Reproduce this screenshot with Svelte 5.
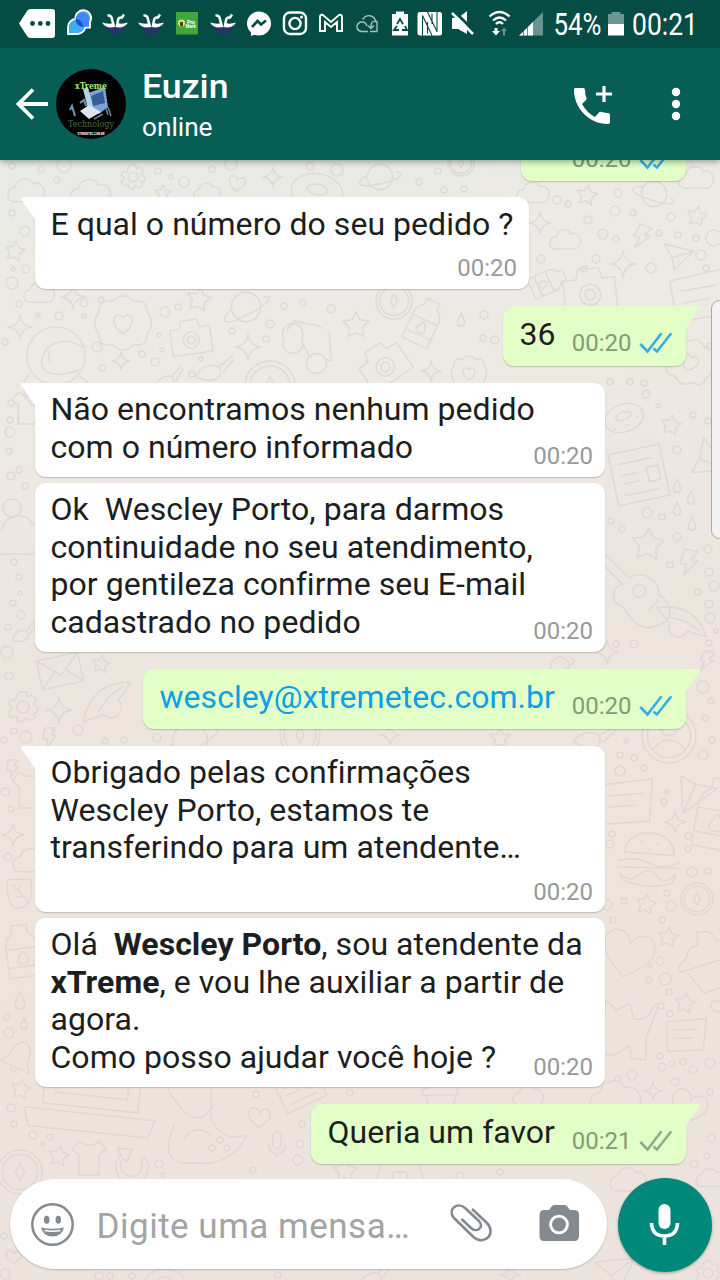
<script>
  const messages = [
    { out: true, width: 165, gap: 0, lines: [''], time: '00:20', read: true },
    { tail: true, width: 494.5, height: 91.5, gap: 16.5, stack: true, lines: ['E qual o número do seu pedido ?'], time: '00:20' },
    { out: true, tail: true, width: 183, height: 60, gap: 17, lines: ['36'], time: '00:20', read: true },
    { tail: true, width: 570.5, height: 94, gap: 17, lines: ['Não encontramos nenhum pedido', 'com o número informado'], time: '00:20' },
    { width: 570.5, height: 169, gap: 6, lines: ['Ok  Wescley Porto, para darmos', 'continuidade no seu atendimento,', 'por gentileza confirme seu E-mail', 'cadastrado no pedido'], time: '00:20' },
    { out: true, tail: true, link: true, width: 543, height: 60, gap: 17, lines: ['wescley@xtremetec.com.br'], time: '00:20', read: true },
    { tail: true, width: 570.5, height: 166.5, gap: 17, stack: true, lines: ['Obrigado pelas confirmações', 'Wescley Porto, estamos te', 'transferindo para um atendente…'], time: '00:20' },
    { width: 570.5, height: 169.5, gap: 5.5, lines: ['Olá  *Wescley Porto*, sou atendente da', '*xTreme*, e vou lhe auxiliar a partir de', 'agora.', 'Como posso ajudar você hoje ?'], time: '00:20' },
    { out: true, tail: true, width: 375, height: 60, gap: 17, lines: ['Queria um favor'], time: '00:21' }
  ];

  const shapes = {
    star: 'M0-10L3-4 10-3 5 2 6 9 0 6-6 9-5 2-10-3-3-4Z',
    spark: 'M0-10Q1-1 10 0Q1 1 0 10Q-1 1-10 0Q-1-1 0-10Z',
    heart: 'M0 8C-5 4-10 1-9-5C-7-10-1-9 0-4C2-9 8-9 9-4C10 1 5 4 0 8Z',
    cloud: 'M-7 6C-13 4-9-3-6-2C-5-8 3-8 4-4C10-6 13 3 7 6Z',
    drop: 'M0-10C2-4 6 0 5 5C4 10-4 10-5 5C-6 0-2-4 0-10Z',
    bolt: 'M-4-10H6L2-3H7L-2 10-1 1H-6Z',
    gear: 'M-2-10H2L3-7 6-8 9-5 7-2 10 0 10 3 7 4 8 7 5 9 2 7 0 10-4 9-4 6-8 7-10 4-7 1-10-2-8-5-5-4-4-8ZM4 0A4 4 0 1 1-4 0A4 4 0 1 1 4 0',
    planet: 'M7 0A7 7 0 1 1-7 0A7 7 0 1 1 7 0M-7 1C-14 8-9 9 0 4C9 0 15-6 8-5',
    camera: 'M-10-5H-5L-4-9H4L5-5H10V8H-10ZM4 1A4 4 0 1 1-4 1A4 4 0 1 1 4 1M2 1A2 2 0 1 1-2 1A2 2 0 1 1 2 1',
    mail: 'M-10-7H10V7H-10ZL0 2 10-7M-10 7L-3 0M10 7L3 0',
    news: 'M-9-9H9V9H-9ZM-6-5H6M-6-1H0M-6 2H0M-6 6H6M3-2H7V3H3Z',
    badge: 'M-4-8Q0-12 4-8Q9-9 9-4Q12 0 9 4Q9 9 4 8Q0 12-4 8Q-9 9-9 4Q-12 0-9-4Q-9-9-4-8ZM0 4C-6 0-3-5 0-2C3-5 6 0 0 4Z',
    helmet: 'M10 0A10 10 0 1 1-10 0A10 10 0 1 1 10 0M9-3C4-7-4-5-5 2C-5 7 1 7 8 5M-2-2Q-3 0-2 2M-9 6C-13 10-11 16-6 18M8 7C14 10 14 15 10 18',
    glasses: 'M-3-3A4 4 0 1 1-10-3A4 4 0 1 1-3-3M7 7A4 4 0 1 1-1 7A4 4 0 1 1 7 7M-3-2L0 4M-9-6L-6-10C-3-8 3-10 5-7M-6-10L4-8M8-6L9 6 6 5',
    bottle: 'M-3-10H3V-7Q6-5 6-2V10H-6V-2Q-6-5-3-7ZM-6-1H6M-6 6H6M0 0Q4 5 0 5Q-4 5 0 0',
    burger: 'M-8-2C-8-11 8-11 8-2ZM-10 1Q-5-1 0 1T10 0M-10 3L10 2M-9 5Q-6 8-3 5T3 5T9 4L8 7Q0 10-8 7ZM-3-6L-2-5M2-6L3-5M0-4V-3',
    cake: 'M0-10C7-9 4-6 6-5C10-4 8-1 9 1H-9C-10-2-7-2-6-3C-4-5-5-6-1-6ZM-7 2L-4 10H5L8 2',
    ring: 'M10 0A10 10 0 1 1-10 0A10 10 0 1 1 10 0M8 0A8 8 0 1 1-8 0A8 8 0 1 1 8 0M0-4L2 0 0 4-2 0Z',
    person: 'M10 0A10 10 0 1 1-10 0A10 10 0 1 1 10 0M8 0A8 8 0 1 1-8 0A8 8 0 1 1 8 0M3-3A3 3 0 1 1-3-3A3 3 0 1 1 3-3M-6 5Q0-2 6 5',
    laptop: 'M-8-10V6H8V-10M-6-10V4H6V-10M-11 7L11 7 10 10H-10ZM-2 0Q0 5 4 0',
    bell: 'M0-9C5-8 5-2 6 2L9 6H-9L-6 2C-5-2-5-8 0-9ZM-2 7Q0 10 2 7',
    leaf: 'M-8-8H6V2Q4 9-3 9Q-9 7-8-8M-5-5L5 6M-1-1V-5M2 2H-3',
    guitar: 'M-12-13L-3-4C1-7 7-3 6 1C11 4 11 10 5 11C0 13-3 8-5 5C-10 3-8-2-5-2L-14-11M2 0A2 2 0 1 1-2 0A2 2 0 1 1 2 0M3 6L6 3',
    wing: 'M-10 8C-8-2-2-8 9-8C7-4 5-2 4-1C8 3 3 9-2 5ZM-4 4Q0-3 6-6',
    plane: 'M-10-5L10-7 2 9-2 2ZM-2 2L10-7',
    tee: 'M-6-10L-10-5-6-2V10H6V-2L10-5 6-10Q0-5-6-10',
    reload: 'M7-5A9 9 0 1 1-6-6L-8-10 0-9-3-2-5-4A6 6 0 1 0 5-3Z',
    mic: 'M-3-6Q0-12 3-6V1Q0 6-3 1ZM-6-1Q-6 7 0 7T6-1M0 7V10',
    dino: 'M-10-10Q-3 3 2-6M-8-1Q-13 10-3 9Q6 10 10 2Q4 4 1-2V-12M-6 3Q-3-1 1 2',
    cat: 'M-8-9L-4-6 0-9 2-4Q7-4 8-9Q10-12 9-7L7 2 8 9H3L2 5-3 9H-8Z',
    brush: 'M-10 7C-8-1 0-3 3 0C6 5 0 10-10 7M2-1L9-9M5 2L10-7',
    donut: 'M10 0A10 7 0 1 1-10 0A10 7 0 1 1 10 0M4-1A4 2 0 1 1-4-1A4 2 0 1 1 4-1M-7 3L-6 4M0 4H1M6 2L7 1',
    note: 'M-9-7L10-8 8 7H-9ZM-6-3H6M-6 1H3'
  };

  // kind, x, y, scale, rotation
  const doodles = [
    ['cloud', 26, 191, 1.8, 0], ['gear', 133, 177, 1.2, 0], ['heart', 237, 184, .9, 10], ['spark', 273, 177, 1, 0], ['donut', 317, 192, 2.6, 10], ['cloud', 90, 193, 2, 0], ['star', 163, 193, .8, 0], ['cloud', 207, 192, 1.3, 0],
    ['planet', 380, 177, 1.8, 15], ['ring', 461, 163, 1.3, 0], ['cloud', 533, 193, 1.6, 0], ['star', 587, 195, 1, 10], ['planet', 654, 194, 1.8, 45], ['star', 697, 216, 1, 10], ['cloud', 696, 178, 1.7, 0], ['spark', 540, 223, 1.1, 0], ['cloud', 565, 240, 1.5, 0], ['bolt', 641, 237, 1.2, 20], ['plane', 676, 256, 1.5, 20], ['spark', 623, 264, 1.3, 0], ['bottle', 548, 282, 1.8, 65],
    ['star', 15, 251, 1, 10], ['helmet', 56, 356, 2.9, 0], ['badge', 123, 323, 2.7, 0], ['camera', 191, 338, 2, -8], ['planet', 246, 307, 2.1, 0], ['spark', 20, 327, 1.2, 0], ['spark', 73, 297, 1.2, 0], ['spark', 121, 361, .9, 0], ['star', 199, 299, 1.2, 10], ['spark', 248, 347, 1.3, 0], ['glasses', 309, 346, 2.5, 0], ['star', 356, 325, 1.3, 0], ['cloud', 39, 293, 1.5, 0],
    ['ring', 394, 301, 1.8, 0], ['bottle', 424, 322, 2.3, 25], ['drop', 461, 320, .7, 0], ['camera', 384, 365, 2.3, -35], ['spark', 431, 371, 1, 0], ['badge', 469, 373, 1.7, 0], ['camera', 590, 292, 2.6, -5], ['note', 700, 297, 3, -10], ['badge', 690, 362, 2.3, 20], ['donut', 624, 418, 2, -20],
    ['ring', 270, 386, 2.5, 0], ['brush', 169, 378, 1.4, 0], ['brush', 215, 368, 1.7, 10], ['tee', 28, 408, 1.6, 0],
    ['star', 671, 425, 1, 10], ['news', 639, 475, 2.9, -12], ['plane', 705, 460, 2, 60], ['drop', 677, 486, .7, 0], ['drop', 691, 498, .7, 0], ['drop', 677, 509, .7, 0], ['drop', 692, 524, .7, 0], ['star', 648, 544, 1.6, 5], ['bolt', 688, 563, 1.3, 10], ['guitar', 639, 591, 3.2, 0], ['wing', 682, 623, 2.3, 70], ['planet', 560, 666, 1.3, 0], ['bolt', 706, 661, 1, 20], ['spark', 607, 652, 1.2, 0],
    ['cloud', 20, 536, 3, 0], ['brush', 24, 632, 1.2, 0], ['mail', 60, 671, 2.1, -12], ['star', 101, 664, .9, 10], ['gear', 23, 707, 1.5, 0], ['spark', 59, 710, 1.3, 0], ['wing', 108, 702, 2.5, 0], ['bolt', 49, 738, 1, 0], ['bolt', 12, 769, .9, 0], ['tee', 30, 790, 1.8, 0], ['planet', 190, 741, 2.5, 0],
    ['ring', 300, 735, 2, 0], ['spark', 390, 735, 1, 0], ['star', 500, 738, 1, 0], ['brush', 595, 736, 1.8, 20], ['person', 669, 736, 2.7, 0], ['note', 626, 803, 2.8, -4], ['plane', 694, 790, 2.1, 150], ['bottle', 718, 814, 3.5, 10], ['burger', 649, 860, 3.1, 4], ['spark', 675, 822, 1.1, 0], ['ring', 697, 899, 1.6, 0], ['star', 646, 904, 1, 10], ['star', 668, 937, 1, 10], ['cake', 706, 961, 3, -18], ['heart', 628, 955, 2.8, 12], ['star', 685, 1003, 1, 10], ['note', 686, 1036, 2.1, -2], ['cat', 626, 1030, 3, 8],
    ['spark', 13, 835, 1.1, 0], ['cloud', 31, 861, 1.8, 0], ['leaf', 21, 893, 1.7, 0], ['bottle', 22, 951, 2.6, -8], ['drop', 20, 1001, .9, 0], ['drop', 24, 1024, .6, 0], ['bell', 19, 1057, 1.8, 25], ['star', 21, 1089, 1, 10],
    ['laptop', 94, 1072, 6, 6], ['dino', 207, 1127, 4, 0], ['heart', 259, 1118, 1.2, 5], ['news', 298, 1085, 2.4, -25], ['mic', 277, 1144, 1.4, 0], ['ring', 20, 1172, 2.2, 0], ['star', 59, 1156, 1, 10], ['tee', 89, 1158, 1.7, 0], ['reload', 132, 1166, 1.8, 0], ['cloud', 528, 1096, 1.5, 0], ['cloud', 615, 1098, 2.5, 0], ['spark', 653, 1091, .9, 0], ['heart', 688, 1108, 2, 20], ['badge', 400, 1178, 2.2, 0], ['cloud', 710, 1178, 1.4, 0], ['cloud', 628, 1180, 1.8, 0], ['star', 345, 1171, 1.2, 0], ['gear', 708, 1273, 1.2, 0], ['plane', 615, 1272, 2, 0], ['heart', 14, 1257, .8, 0], ['donut', 165, 1283, 2, 0], ['brush', 375, 1275, 1.6, 0], ['cake', 440, 1093, 2, 0], ['spark', 510, 1275, 1, 0]
  ];

  const dots = [[12,166,3],[41,169,3],[57,180,3],[64,165,7],[158,171,3],[171,177,2],[184,182,5],[212,169,3],[231,164,6],[310,166,4],[337,170,6],[419,182,3],[438,171,3],[444,190,3],[464,189,3],[557,200,4],[568,204,3],[618,193,4],[615,211,5],[588,220,4],[633,213,3],[671,217,4],[603,234,5],[616,239,3],[659,233,3],[678,235,3],[696,238,3],[714,238,8],[541,259,4],[596,259,4],[651,268,5],[584,269,3],[701,255,5],[706,268,3],[12,213,3],[25,231,5],[26,269,4],[12,283,6],[13,269,2],[19,304,3],[84,303,4],[101,300,3],[38,315,2],[59,316,4],[84,316,2],[165,312,5],[178,307,3],[159,335,2],[97,347,5],[142,354,3],[155,362,4],[102,368,3],[162,350,2],[192,374,3],[201,359,2],[284,306,3],[303,303,3],[331,309,4],[270,324,4],[232,331,3],[266,339,3],[5,342,3],[484,315,4],[483,338,3],[495,340,4],[610,382,3],[630,382,3],[644,383,3],[710,346,3],[11,403,3],[10,420,3],[10,432,5],[9,451,3],[19,470,3],[11,476,4],[25,486,3],[12,508,9],[646,394,4],[658,406,2],[693,415,3],[708,421,3],[677,450,4],[647,513,5],[662,517,3],[611,521,3],[622,529,3],[677,537,4],[670,565,3],[708,549,4],[709,572,4],[714,586,5],[698,592,3],[709,604,4],[710,618,5],[716,631,2],[616,644,3],[634,644,4],[709,643,3],[14,562,3],[19,577,3],[20,593,2],[13,603,3],[21,615,4],[8,627,3],[7,652,6],[9,676,4],[78,730,5],[26,737,6],[14,731,3],[4,740,3],[105,741,3],[124,740,3],[157,738,4],[5,792,4],[11,809,3],[620,755,3],[634,758,3],[620,771,5],[644,768,3],[626,741,2],[703,687,6],[711,701,3],[705,718,3],[712,740,3],[703,755,5],[667,792,2],[664,802,3],[612,834,3],[610,844,4],[688,836,3],[688,849,3],[692,872,5],[708,871,3],[624,901,3],[607,905,5],[667,893,3],[671,906,5],[613,920,3],[662,920,3],[660,961,4],[650,966,2],[649,980,3],[665,979,6],[669,992,3],[661,1006,3],[670,1014,3],[717,1006,6],[660,1056,3],[662,1067,4],[672,1064,3],[693,1070,4],[683,1062,3],[710,1063,5],[632,1075,5],[618,1079,3],[675,1082,4],[8,857,4],[7,1017,3],[9,1033,5],[11,1108,4],[14,1124,3],[33,1135,4],[50,1137,3],[43,1144,2],[256,1094,3],[220,1140,3],[212,1148,3],[227,1148,3],[159,1164,4],[163,1175,2],[253,1170,3],[300,1144,4],[298,1160,5],[302,1124,3],[350,1093,3],[4,1236,3],[5,1274,5],[99,1276,4],[110,1276,3],[132,1276,3],[278,1275,3],[710,1092,3],[711,1138,4],[694,1164,4],[707,1156,3],[460,1176,4],[500,1172,3]];

  const parts = (line) => line.split('*');
</script>

{#snippet fit(text, x, y, w, size, weight = 400)}
  <text {x} {y} textLength={w} lengthAdjust="spacingAndGlyphs" font-size={size} font-weight={weight}>{text}</text>
{/snippet}

<div class="screen">
  <svg class="wallpaper" width="720" height="1280" viewBox="0 0 720 1280" aria-hidden="true">
    {#each doodles as [kind, x, y, s, r]}
      <path d={shapes[kind]} transform={`translate(${x} ${y}) rotate(${r}) scale(${s})`} />
    {/each}
    {#each dots as [x, y, r]}
      <circle cx={x} cy={y} {r} />
    {/each}
  </svg>

  <header>
    <svg class="status" width="720" height="48" viewBox="0 0 720 48" fill="#fff">
      <path d="M19 23.5L27 11Q28 9 31 9H52Q55 9 55 12V35Q55 38 52 38H31Q28 38 27 36Z" />
      <g fill="#054c44"><circle cx="32.5" cy="23.5" r="2.4" /><circle cx="40.3" cy="23.5" r="2.4" /><circle cx="48" cy="23.5" r="2.4" /></g>
      <path d="M68 34V26.500A8 8 0 0 1 75.500 19A7.800 7.800 0 1 1 90 22V27.500H85.500A9 9 0 0 1 76 34Z" fill="#45aaf0" stroke="#fff" stroke-width="1.800" />
      <path d="M75.500 20A7 7 0 1 1 89 22V26.700H83A8 8 0 0 1 75.500 20Z" fill="#4285ff" />
      <path d="M75.500 19A8 8 0 0 1 83.500 27A8 8 0 0 1 75.500 19Z" fill="#1458d8" />
      {#each [115, 151, 223] as cx}
        <g transform={`translate(${cx} 24)`}>
          <path d="M-10 4Q-7 10 0 10T10 4Z" fill="#24336d" />
          <path d="M-13-1.500Q-7 .5-1-1L0 3Q-9 5-13-1.500ZM13-1.500Q7 .5 3-1L0 3Q9 5 13-1.500Z" />
          <path d="M-7.500-8.500Q-4-9-3.300-6T-1.200 2M9-9.500L7-6.500Q3.500-7 3-4T2 2" fill="none" stroke="#fff" stroke-width="2.500" />
        </g>
      {/each}
      <rect x="176" y="12" width="22" height="22.500" fill="#43a63d" />
      <circle cx="181.500" cy="23" r="3.500" fill="#efdd64" /><rect x="180" y="22" width="3" height="4" fill="#284b25" />
      <text x="187" y="23.5" font-size="5" font-weight="700">Pro</text><text x="185.500" y="27.500" font-size="4.500" font-weight="700">Mark</text>
      <circle cx="259" cy="23.500" r="12" /><path d="M251 29V36L257 34Z" />
      <path d="M252 27L257.500 21 261 24.500 266 20.500" fill="none" stroke="#054c44" stroke-width="2.600" />
      <g fill="none" stroke="#fff" stroke-width="2.400">
        <rect x="284" y="12.500" width="22" height="21.500" rx="6" /><circle cx="295" cy="23.500" r="5.600" />
        <path d="M320 31V17Q320 14 323 15L331 22 339 15Q342 14 342 17V31H337V22L331 27 325 22V31Z" stroke-width="1.900" />
      </g>
      <circle cx="301.500" cy="17" r="1.500" />
      <path d="M368 31.500H361.500Q356.500 30.500 357 26Q358 21.500 363 22Q366 22.500 367 26M362.500 19.500Q366 14.500 371 16Q375 17.500 375.500 21M373 21.500H377V31.500H370M372.500 21.500Q371 23 371 28M368 25.500L371 28.500 374 25.500" fill="none" stroke="#a5c1bd" stroke-width="1.400" />
      <path d="M392 14H396V11.500H404V14H408V35.500H392Z" />
      <path d="M397 23L400 18 403 23M405 25L407 29H402M399 29H394L397 25" transform="translate(0 1)" fill="none" stroke="#054c44" stroke-width="1.800" />
      <rect x="417.500" y="12" width="24.500" height="23.500" rx="2.500" />
      <path d="M422.500 35.500V15.500M437 12V32M427.500 12L437 31.500M422.500 15.500L432 35.500M427.500 22V33.500M432 13.500V24" stroke="#054c44" stroke-width="1.100" fill="none" />
      <path d="M452 18H458L467 11V34L458 29H452Z" /><path d="M454 11L475 32" stroke="#054c44" stroke-width="3" /><path d="M452 13L473 34" stroke="#fff" stroke-width="2.500" />
      <g fill="none" stroke="#fff" stroke-width="2.300"><path d="M489.500 16.500Q499.500 7.500 509.500 16.500M493 20.500Q499.500 14.500 506 20.500M496 24Q499.500 20.500 503 24" /></g>
      <path d="M494.500 28H497.500V31H500L496 35.500 492 31H494.500Z" /><path d="M503 35.500V31H501L504 27.500 507 31H505V35.500Z" opacity=".4" />
      <path d="M519 35.500L543 12V35.500Z" opacity=".4" /><path d="M519 35.500L523 32V35.500ZM524 31L527 28V35.500H524ZM528 27L533 22V35.500H528Z" />
      {@render fit('54%', 553.5, 35, 48, 30.500)}
      <path d="M608 14H611.500V12H620.500V14H624V24H608Z" opacity=".42" /><path d="M608 24H624V35.500H608Z" />
      {@render fit('00:21', 632, 35, 66, 30.500)}
    </svg>

    <svg class="bar" width="720" height="112" viewBox="0 48 720 112" fill="#fff">
      <path d="M33 89.500L18.500 104 33 118.500M18 104H48" fill="none" stroke="#fff" stroke-width="3.800" />
      <circle cx="91" cy="104" r="35" fill="#000" />
      <path d="M88 93L105 87 108 107 99 114 88 105Z" fill="#7ba4d0" />
      <path d="M91 96L103 91 105 103 93 106Z" fill="#365d9b" /><path d="M83 89L88 87 93 107 88 109Z" fill="#b1d2e7" />
      <path d="M80 111L89 105 101 112 89 119Z" fill="#dbe7f0" /><path d="M70 110L72 106 75 116M80 103L84 100 86 106" stroke="#7198b5" stroke-width="2" fill="none" />
      <path d="M94 119L103 114M108 115L106 108M111 116L108 107" stroke="#668398" stroke-width="1.500" />
      <g class="serif"><g fill="#a5e86c">{@render fit('xTreme', 75, 89, 32, 10, 700)}</g><g fill="#477336">{@render fit('Technology', 68, 127, 46, 10)}</g></g>
      {@render fit('XTREMETEC.COM.BR', 77.500, 135, 27, 3.500, 700)}
      {@render fit('Euzin', 142, 98.300, 86.500, 34, 500)}
      {@render fit('online', 142, 136, 70.500, 26)}
      <path d="M575 88H583Q585 88 585 90Q585 95 586.500 98Q587 99 586 100L582 104Q587 113 595 117L599 112.500Q600 111.500 602 112Q605 113 608 113Q610 113 610 115V122Q610 124 608 124C589 124 574 108 574 90Q574 88 575 88Z" />
      <path d="M604 86V102M596 94H612" stroke="#fff" stroke-width="3.200" />
      <circle cx="676" cy="92" r="4.200" /><circle cx="676" cy="104" r="4.200" /><circle cx="676" cy="116" r="4.200" />
    </svg>
  </header>

  <main>
    {#each messages as m, i}
      <article class:out={m.out} class:stack={m.stack} class:partial={i === 0} style:width="{m.width}px" style:height="{m.height ?? 20.5}px" style:margin-top="{m.gap}px">
        {#if m.tail}
          <svg class="tail" width="17" height="25" viewBox="0 0 17 25"><path d="M17 0H3Q0 0 1.500 3L15 22V25H17Z" /></svg>
        {/if}
        {#if i > 0}
          <div class="copy" class:link={m.link}>
            {#each m.lines as line}
              <p>{#each parts(line) as part, k}{#if k % 2}<b>{part}</b>{:else}{part}{/if}{/each}</p>
            {/each}
          </div>
        {/if}
        <div class="meta">
          <time>{m.time}</time>
          {#if m.out}
            <svg class:read={m.read} width="34" height="22" viewBox="639 331 34 22"><path d="M640.300 343L647.500 350.500 661.500 332.300M653.500 347.500L657 350.500 671.300 332.300" /></svg>
          {/if}
        </div>
      </article>
    {/each}
  </main>

  <footer>
    <div class="field">
      <svg width="46" height="46" viewBox="30 1202 46 46">
        <circle cx="52.500" cy="1224.500" r="20.200" fill="none" stroke="#858a90" stroke-width="2.500" />
        <ellipse cx="46.700" cy="1219.700" rx="2.800" ry="4" fill="#858a90" /><ellipse cx="58.300" cy="1219.700" rx="2.800" ry="4" fill="#858a90" />
        <path d="M41 1227.500Q52.500 1230 64 1227.500Q62 1236.500 52.500 1236.500T41 1227.500Z" fill="#858a90" /><path d="M44.500 1230.500Q52.500 1232 60.500 1230.500" stroke="#fff" stroke-width="1.600" fill="none" />
      </svg>
      <span>Digite uma mensa…</span>
      <svg class="clip" width="46" height="46" viewBox="448 1202 46 46">
        <path d="M472 1210L486.500 1223.500C497 1234 485 1247 474 1238.500L454 1219C447 1211 457 1202 465 1209L479 1222C485 1229 476 1234 471 1229L461.500 1220" fill="none" stroke="#858a90" stroke-width="2.600" />
      </svg>
      <svg width="42" height="40" viewBox="538 1203 42 40">
        <path d="M544 1209H549L552 1205Q553 1204 555 1204H564Q566 1204 567 1205L570 1209H574Q579 1209 579 1214V1235Q579 1240 574 1240H544Q539.500 1240 539.500 1235V1214Q539.500 1209 544 1209Z" fill="#858a90" />
        <circle cx="559" cy="1223.500" r="8.400" fill="none" stroke="#fff" stroke-width="2.900" />
      </svg>
    </div>
    <button aria-label="Microfone">
      <svg width="32" height="44" viewBox="649 1203 32 44"><rect x="658.500" y="1204" width="12" height="25" rx="6" fill="#fff" /><path d="M651.500 1223Q652 1236 664.500 1236T677.500 1223M664.500 1236V1245" fill="none" stroke="#fff" stroke-width="3.600" /></svg>
    </button>
  </footer>
  <aside></aside>
</div>

<style>
  :global(body) { margin: 0; }
  .screen { position: relative; width: 720px; height: 1280px; overflow: hidden; display: flex; flex-direction: column; font-family: Roboto, sans-serif; background: linear-gradient(172deg, #e8ebe6 10%, #edeae5 24%, #ede6df 48%, #ede5dd 75%, #ede3dd); }
  svg { display: block; flex: none; }
  .wallpaper { position: absolute; inset: 0; fill: none; stroke: #dcd5cf; stroke-width: 1.5; stroke-linejoin: round; opacity: .75; }
  .wallpaper path { vector-effect: non-scaling-stroke; }
  header { position: relative; z-index: 2; height: 160px; background: #075e54; box-shadow: 0 2px 6px #0005; flex: none; }
  .status { background: #054c44; }
  .serif { font-family: "DejaVu Serif", serif; }
  main { position: relative; flex: 1; display: flex; flex-direction: column; align-items: flex-start; padding: 0 34.5px 0 34.5px; }
  article { position: relative; box-sizing: border-box; flex: none; display: flex; align-items: flex-end; padding: 8.5px 12px 6.5px 16px; border-radius: 11px; background: #fff; box-shadow: 0 1px 1.500px #0003; color: #1d1e20; }
  article:has(.tail) { border-top-left-radius: 0; }
  article.out { align-self: flex-end; background: #e1ffc7; padding: 10px 12px 9px 17px; border-radius: 11px; }
  article.out:has(.tail) { border-top-right-radius: 0; }
  article.partial { border-radius: 0 0 11px 11px; align-items: flex-end; justify-content: flex-end; padding-bottom: 8px; }
  .tail { position: absolute; left: -15px; top: 0; fill: #fff; }
  .out .tail { left: auto; right: -15px; transform: scaleX(-1); fill: #e1ffc7; }
  .copy { flex: 1; min-width: 0; align-self: flex-start; white-space: pre; font-size: 32px; line-height: 37.5px; letter-spacing: .04px; }
  .copy p { margin: 0; }
  .link { color: #0b9fe8; }
  .meta { display: flex; align-items: center; gap: 8px; flex: none; color: #999; font-size: 24px; line-height: 28px; }
  .out .meta { color: #849b75; }
  .meta svg { margin-left: -1px; margin-right: 1px; fill: none; stroke: #94a98a; stroke-width: 2.600; }
  .meta svg.read { stroke: #35aee5; }
  .stack { flex-direction: column; }
  .stack .copy { flex: none; align-self: stretch; }
  .stack .meta { margin-top: auto; }
  footer { position: relative; flex: none; height: 103px; display: flex; gap: 10.5px; padding: .5px 8px 0 10px; box-sizing: border-box; }
  .field { box-sizing: border-box; flex: none; margin-top: 1.5px; width: 597px; height: 90px; border-radius: 46px; background: #fff; box-shadow: 0 1px 2px #0003; display: flex; align-items: center; padding: 0 27px 0 19.5px; }
  .field svg:first-child { margin-top: 1px; }
  .field span { position: relative; top: 3px; margin-left: 21px; flex: 1; white-space: nowrap; color: #a4a4a4; font-size: 35px; line-height: 44px; letter-spacing: .5px; }
  .clip { margin-right: 44px; }
  button { flex: none; width: 94px; height: 94px; border: 0; border-radius: 50%; background: #00897b; padding: 0; display: grid; place-items: center; box-shadow: 0 1px 3px #0005; }
  aside { position: absolute; right: -8px; top: 300px; width: 17px; height: 239px; box-sizing: border-box; border: 1px solid #aaa7a5; border-radius: 9px; background: #f5f4f2e8; }
</style>
